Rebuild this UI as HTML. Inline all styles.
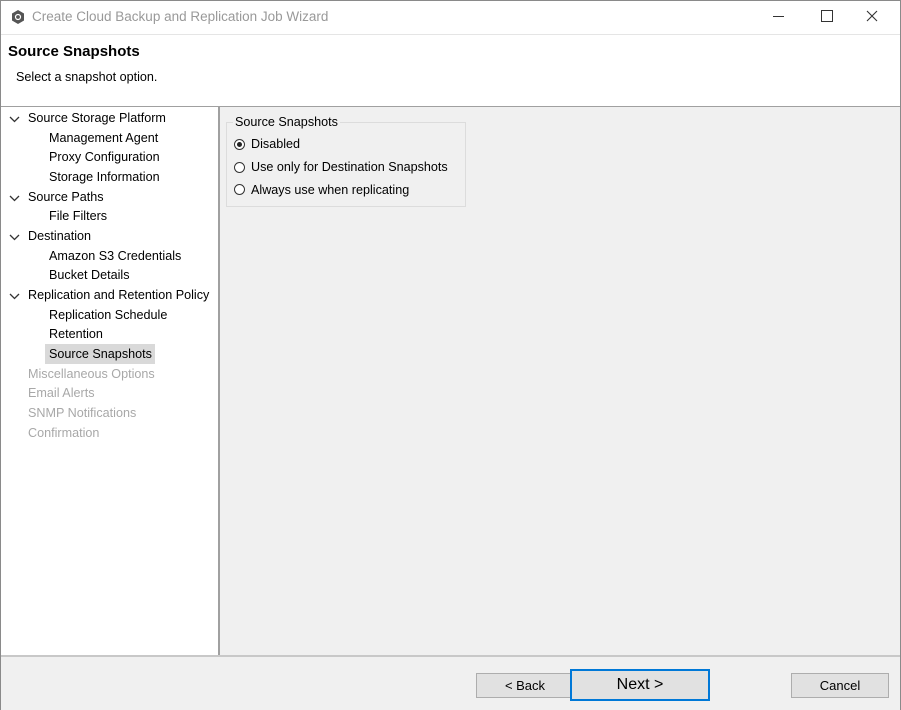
<!DOCTYPE html><html><head><style>
body{margin:0;width:901px;height:710px;overflow:hidden;font-family:"Liberation Sans",sans-serif;background:#fff;position:relative}
.a{position:absolute;white-space:nowrap}
.t{font-size:12.6px;color:#000}
.g{color:#a8a8a8}
.btn{position:absolute;background:#e1e1e1;border:1px solid #adadad;font-size:13px;text-align:center;box-sizing:border-box}
.r{position:absolute;width:11px;height:11px;border:1px solid #333;border-radius:50%;background:#fff;box-sizing:border-box}
.c{position:absolute;left:9px}
</style></head><body>
<div class="a" style="left:0;top:0;width:899px;height:708px;border:1px solid #8a8a8a"></div>
<svg class="a" style="left:10px;top:9px" width="16" height="16"><polygon points="8,1 14,4.5 14,11.5 8,15 2,11.5 2,4.5" fill="#555"/><circle cx="8" cy="8" r="2.5" fill="none" stroke="#fff" stroke-width="1.2"/></svg>
<div class="a" style="left:32px;top:9px;font-size:13.5px;color:#999">Create Cloud Backup and Replication Job Wizard</div>
<div class="a" style="left:773px;top:16px;width:11px;height:1px;background:#333"></div>
<div class="a" style="left:821px;top:10px;width:10px;height:10px;border:1px solid #333"></div>
<svg class="a" style="left:866px;top:10px" width="12" height="12"><path d="M1 1L11 11M11 1L1 11" stroke="#333" stroke-width="1.1"/></svg>
<div class="a" style="left:1px;top:34px;width:899px;height:1px;background:#e5e5e5"></div>
<div class="a" style="left:8px;top:43px;font-size:15px;font-weight:bold">Source Snapshots</div>
<div class="a t" style="left:16px;top:70px">Select a snapshot option.</div>
<div class="a" style="left:1px;top:106px;width:899px;height:1px;background:#a0a0a0"></div>
<div class="a" style="left:220px;top:107px;width:680px;height:548px;background:#f0f0f0"></div>
<div class="a" style="left:218px;top:107px;width:2px;height:548px;background:#a0a0a0"></div>
<div class="a" style="left:1px;top:655px;width:899px;height:53px;background:#f0f0f0;border-top:2px solid #c8c8c8"></div>
<svg class="c" style="top:115px" width="11" height="8"><path d="M1 2L5.5 6.5L10 2" fill="none" stroke="#333" stroke-width="1.3"/></svg>
<svg class="c" style="top:194px" width="11" height="8"><path d="M1 2L5.5 6.5L10 2" fill="none" stroke="#333" stroke-width="1.3"/></svg>
<svg class="c" style="top:233px" width="11" height="8"><path d="M1 2L5.5 6.5L10 2" fill="none" stroke="#333" stroke-width="1.3"/></svg>
<svg class="c" style="top:292px" width="11" height="8"><path d="M1 2L5.5 6.5L10 2" fill="none" stroke="#333" stroke-width="1.3"/></svg>
<div class="a t" style="left:28px;top:111px">Source Storage Platform</div>
<div class="a t" style="left:49px;top:131px">Management Agent</div>
<div class="a t" style="left:49px;top:150px">Proxy Configuration</div>
<div class="a t" style="left:49px;top:170px">Storage Information</div>
<div class="a t" style="left:28px;top:190px">Source Paths</div>
<div class="a t" style="left:49px;top:209px">File Filters</div>
<div class="a t" style="left:28px;top:229px">Destination</div>
<div class="a t" style="left:49px;top:249px">Amazon S3 Credentials</div>
<div class="a t" style="left:49px;top:268px">Bucket Details</div>
<div class="a t" style="left:28px;top:288px">Replication and Retention Policy</div>
<div class="a t" style="left:49px;top:308px">Replication Schedule</div>
<div class="a t" style="left:49px;top:327px">Retention</div>
<div class="a" style="left:45px;top:344px;width:110px;height:20px;background:#d9d9d9"></div>
<div class="a t" style="left:49px;top:347px">Source Snapshots</div>
<div class="a t g" style="left:28px;top:367px">Miscellaneous Options</div>
<div class="a t g" style="left:28px;top:386px">Email Alerts</div>
<div class="a t g" style="left:28px;top:406px">SNMP Notifications</div>
<div class="a t g" style="left:28px;top:426px">Confirmation</div>
<div class="a" style="left:226px;top:122px;width:240px;height:85px;border:1px solid #dcdcdc;box-sizing:border-box"></div>
<div class="a t" style="left:233px;top:115px;background:#f0f0f0;padding:0 2px">Source Snapshots</div>
<div class="r" style="left:234px;top:139px"></div><div class="a" style="left:237px;top:142px;width:5px;height:5px;border-radius:50%;background:#222"></div>
<div class="a t" style="left:251px;top:137px">Disabled</div>
<div class="r" style="left:234px;top:162px"></div><div class="a t" style="left:251px;top:160px">Use only for Destination Snapshots</div>
<div class="r" style="left:234px;top:184px"></div><div class="a t" style="left:251px;top:183px">Always use when replicating</div>
<div class="btn" style="left:476px;top:673px;width:98px;height:25px;line-height:23px">&lt; Back</div>
<div class="btn" style="left:570px;top:669px;width:140px;height:32px;line-height:28px;font-size:16px;border:2px solid #0078d7">Next &gt;</div>
<div class="btn" style="left:791px;top:673px;width:98px;height:25px;line-height:23px">Cancel</div>
</body></html>
